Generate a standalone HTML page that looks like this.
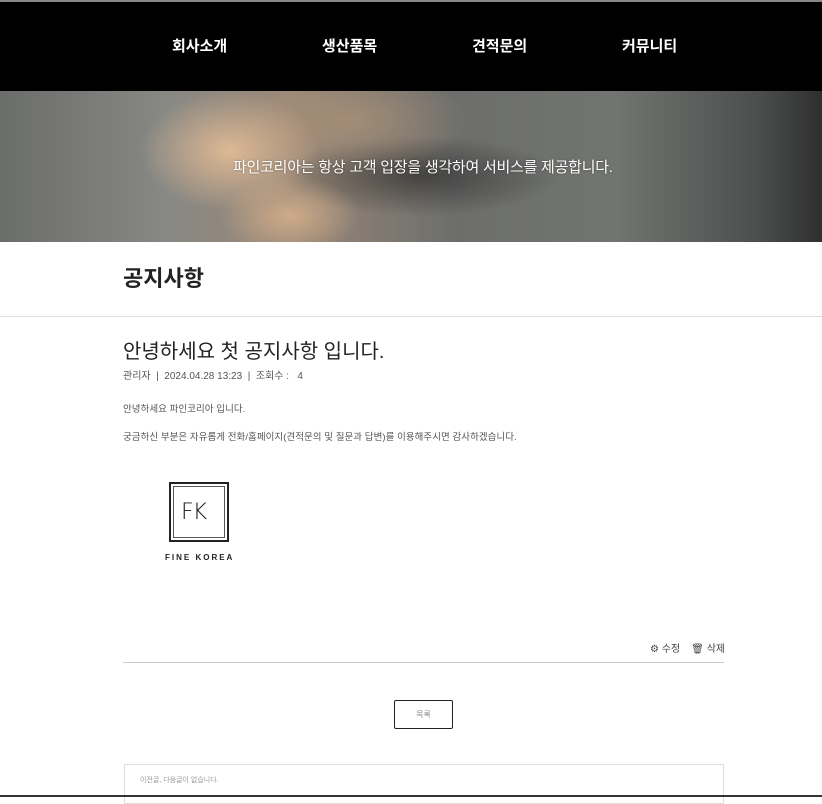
<!DOCTYPE html>
<html><head><meta charset="utf-8"><style>
*{margin:0;padding:0;box-sizing:border-box}
body{width:822px;height:797px;overflow:hidden;background:#fff;font-family:"Liberation Sans","Noto Sans CJK KR",sans-serif;position:relative}
.top{position:absolute;left:0;top:0;width:822px;height:91px;background:#000;border-top:2px solid #888}
.nav a{position:absolute;top:33px;color:#fff;font-weight:bold;font-size:15px;text-decoration:none}
.banner{position:absolute;left:0;top:91px;width:822px;height:151px;overflow:hidden;
background:
radial-gradient(ellipse 90px 60px at 230px 60px,rgba(230,190,150,.9),transparent),
radial-gradient(ellipse 70px 40px at 290px 125px,rgba(220,180,140,.8),transparent),
radial-gradient(ellipse 120px 50px at 350px 30px,rgba(180,150,120,.6),transparent),
radial-gradient(ellipse 140px 40px at 420px 85px,rgba(20,20,20,.5),transparent),
linear-gradient(90deg,#6b6d6b 0%,#878884 20%,#9a8878 35%,#6d6e6c 55%,#717470 75%,#4d4f4e 92%,#2e2f2f 100%)}
.banner p{position:absolute;left:233px;top:65px;color:#fff;font-size:15px;letter-spacing:-0.25px;text-shadow:0 0 2px rgba(0,0,0,.4);white-space:nowrap}
.title{position:absolute;left:123px;top:261px;font-size:22px;font-weight:bold;color:#222}
.hr1{position:absolute;left:0;top:316px;width:822px;border-top:1px solid #ddd}
.h1{position:absolute;left:123px;top:335px;font-size:20px;color:#222}
.meta{position:absolute;left:123px;top:367px;font-size:10px;color:#555}
.t{position:absolute;left:123px;font-size:9.5px;color:#555;letter-spacing:0.05px}
.logo{position:absolute;left:169px;top:482px;width:60px;height:60px;border:2px solid #222}
.logo:after{content:"";position:absolute;left:2px;top:2px;right:2px;bottom:2px;border:1px solid #555}
.fk{position:absolute;left:10px;top:16px;font-size:22px;font-weight:300;letter-spacing:-1px;color:#111;font-family:"DejaVu Sans",sans-serif}
.fine{position:absolute;left:165px;top:553px;font-size:8px;font-weight:bold;letter-spacing:2px;color:#222}
.edit{position:absolute;left:650px;top:640px;font-size:10px;color:#444}
.hr2{position:absolute;left:123px;top:662px;width:601px;border-top:1px solid #ccc}
.btn{position:absolute;left:394px;top:700px;width:59px;height:29px;border:1px solid #222;border-radius:2px;font-size:8px;color:#888;text-align:center;line-height:27px}
.box{position:absolute;left:124px;top:764px;width:600px;height:40px;border:1px solid #ddd;font-size:7px;color:#999;padding:10px 15px}
.bot{position:absolute;left:0;top:795px;width:822px;border-top:2px solid #333}
</style></head><body>
<div class="top"><div class="nav"><a style="left:172px">회사소개</a><a style="left:322px">생산품목</a><a style="left:472px">견적문의</a><a style="left:622px">커뮤니티</a></div></div>
<div class="banner"><p>파인코리아는 항상 고객 입장을 생각하여 서비스를 제공합니다.</p></div>
<div class="title">공지사항</div>
<div class="hr1"></div>
<div class="h1">안녕하세요 첫 공지사항 입니다.</div>
<div class="meta">관리자 &nbsp;|&nbsp; 2024.04.28 13:23 &nbsp;|&nbsp; 조회수 : &nbsp; 4</div>
<div class="t" style="top:401px">안녕하세요 파인코리아 입니다.</div>
<div class="t" style="top:429px">궁금하신 부분은 자유롭게 전화/홈페이지(견적문의 및 질문과 답변)를 이용해주시면 감사하겠습니다.</div>
<div class="logo"><span class="fk">FK</span></div>
<div class="fine">FINE KOREA</div>
<div class="edit">⚙ 수정 &nbsp;&nbsp; 🗑 삭제</div>
<div class="hr2"></div>
<div class="btn">목록</div>
<div class="box">이전글, 다음글이 없습니다.</div>
<div class="bot"></div>
</body></html>
